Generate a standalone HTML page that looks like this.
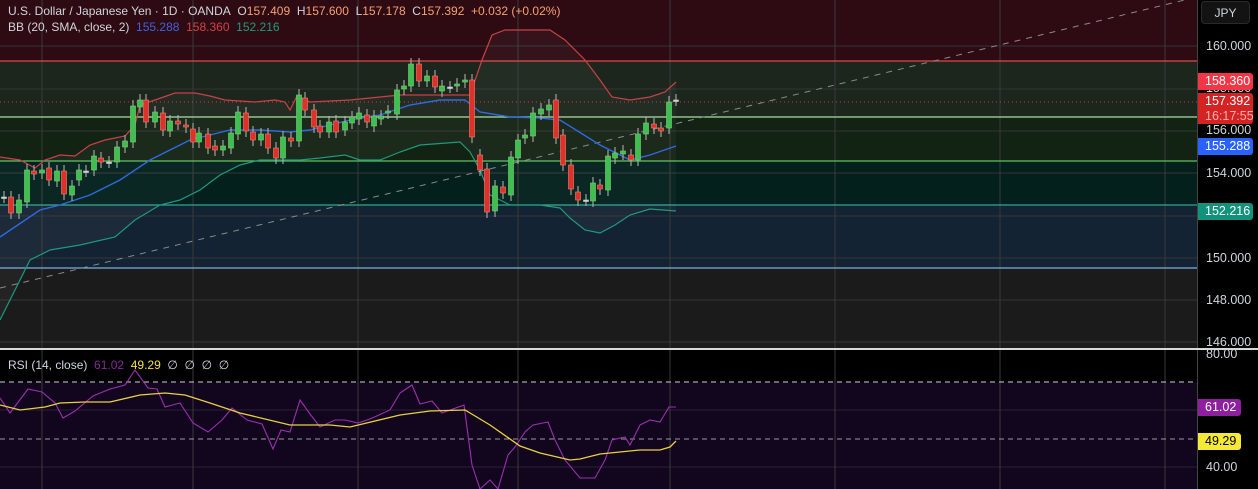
<!DOCTYPE html>
<html><head><meta charset="utf-8"><style>
*{margin:0;padding:0}
body{width:1258px;height:489px;background:#000;overflow:hidden;font-family:"Liberation Sans",sans-serif;position:relative}
svg{position:absolute;left:0;top:0}
.t{position:absolute;font-size:12px;color:#d1d4dc;white-space:nowrap}
.ax{position:absolute;left:1206px;font-size:12.5px;color:#d1d4dc}
.bx{position:absolute;left:1198px;width:55px;height:17px;border-radius:0 3px 3px 0;font-size:12.5px;color:#fff;padding-left:7px;box-sizing:border-box;line-height:17px}
</style></head><body>
<svg id="s" width="1258" height="489"></svg>
<div class="t" style="left:8px;top:4px">U.S. Dollar / Japanese Yen · 1D · OANDA&nbsp; O<span style="color:#f7a072">157.409</span>&nbsp; H<span style="color:#f7a072">157.600</span>&nbsp; L<span style="color:#f7a072">157.178</span>&nbsp; C<span style="color:#f7a072">157.392</span>&nbsp; <span style="color:#f7a072">+0.032 (+0.02%)</span></div>
<div class="t" style="left:8px;top:20px">BB (20, SMA, close, 2)&nbsp; <span style="color:#3e63dd">155.288</span>&nbsp; <span style="color:#d2404c">158.360</span>&nbsp; <span style="color:#1f9c7c">152.216</span></div>
<div class="t" style="left:8px;top:358px">RSI (14, close)&nbsp; <span style="color:#8a2a9a">61.02</span>&nbsp; <span style="color:#f0e040">49.29</span>&nbsp; ∅&nbsp; ∅&nbsp; ∅&nbsp; ∅</div>
<div style="position:absolute;left:1201px;top:1px;width:49px;height:23px;background:#131313;border:1px solid #2a2a2a;border-radius:4px;color:#d1d4dc;font-size:12px;line-height:23px;text-align:center;box-sizing:border-box">JPY</div>
<div class="ax" style="top:39px">160.000</div>
<div class="ax" style="top:81px">158.000</div>
<div class="ax" style="top:123px">156.000</div>
<div class="ax" style="top:166px">154.000</div>
<div class="ax" style="top:251px">150.000</div>
<div class="ax" style="top:293px">148.000</div>
<div class="ax" style="top:335px">146.000</div>
<div class="ax" style="top:347px">80.00</div>
<div class="ax" style="top:460px">40.00</div>
<div class="bx" style="top:73px;background:#f23645">158.360</div>
<div class="bx" style="top:93px;height:31px;background:#d42323;line-height:15px;padding-top:1px">157.392<br><span style="color:#f5b0b0">16:17:55</span></div>
<div class="bx" style="top:138px;background:#2962ff">155.288</div>
<div class="bx" style="top:203px;background:#10937a">152.216</div>
<div class="bx" style="top:399px;width:43px;background:#8e1f9e">61.02</div>
<div class="bx" style="top:433px;width:43px;background:#f5e836;color:#000">49.29</div>
<script>
var S='';
function r(x,y,w,h,c){S+='<rect x="'+x+'" y="'+y+'" width="'+w+'" height="'+h+'" fill="'+c+'"/>';}
function l(x1,y1,x2,y2,c,w,d){S+='<line x1="'+x1+'" y1="'+y1+'" x2="'+x2+'" y2="'+y2+'" stroke="'+c+'" stroke-width="'+(w||1)+'"'+(d?' stroke-dasharray="'+d+'"':'')+'/>';}
function p(a,c,w,f){S+='<polyline points="'+a.join(' ')+'" fill="'+(f||'none')+'" stroke="'+c+'" stroke-width="'+(w||1.2)+'"/>';}
var W=1197;
r(0,0,W,61,'#2e0b12');r(0,61,W,56,'#1d261d');r(0,117,W,44,'#132313');r(0,161,W,44,'#03201d');r(0,205,W,63,'#142333');r(0,268,W,81,'#1b1b1c');
r(0,349,W,33,'#000');r(0,382,W,107,'#12061f');
[46,89,131,173,216,258,300,342].forEach(function(y){l(0,y,W,y,'#343434',1)});
[410,467].forEach(function(y){l(0,y,W,y,'#2a2233',1)});
[42,193,358,518,670,835,1000,1165].forEach(function(x){l(x,0,x,489,'#3a3a3a',1)});
l(W+0.5,0,W+0.5,489,'#444',1);
l(0,61,W,61,'#e04848',1.2);l(0,117,W,117,'#a8e0a0',1.2);l(0,161,W,161,'#5cc45c',1.2);l(0,205,W,205,'#2fa890',1.2);l(0,268,W,268,'#7ab0e0',1.2);
l(0,102,W,102,'#c0392b',1,'1 3');
l(0,349,1258,349,'#d8d8d8',2);
l(0,382,W,382,'#cfcfcf',1,'5 4');l(0,439,W,439,'#9a9a9a',1,'5 4');
var up=[[0,157],[20,160],[35,168],[45,160],[60,155],[75,156],[90,145],[105,140],[125,136],[135,125],[140,105],[155,100],[175,93],[195,93],[210,96],[225,100],[255,102],[275,100],[285,102],[290,110],[297,96],[310,102],[350,100],[380,97],[400,95],[470,95],[482,60],[492,35],[505,30],[550,30],[565,40],[585,60],[600,80],[612,97],[630,100],[650,97],[665,92],[676,82]];
var lo=[[0,320],[10,300],[30,260],[50,250],[80,245],[115,237],[135,220],[160,205],[180,200],[200,190],[220,175],[240,165],[260,160],[300,160],[320,158],[345,155],[360,160],[380,160],[400,152],[420,145],[460,142],[470,152],[480,170],[490,195],[510,205],[540,205],[560,208],[570,218],[585,230],[600,233],[615,225],[630,215],[650,209],[676,211]];
var fill=up.concat(lo.slice().reverse());
p(fill,'none',0,'rgba(255,255,255,0.035)');
l(0,288,1197,-3,'#8a8a8a',1,'6 6');
p(up,'#c8404a',1.2);
p(lo,'#1e9a7c',1.2);
p([[0,237],[40,210],[60,205],[90,195],[120,180],[150,160],[170,150],[190,140],[210,135],[230,130],[260,130],[290,132],[310,130],[330,125],[350,120],[380,115],[410,105],[440,100],[465,100],[480,112],[510,117],[540,118],[560,120],[600,145],[630,160],[650,155],[676,146]],'#2f6ae0',1.4);
var C=[[4,197,197],[11,197,213],[19,213,200],[27,202,170],[34,171,174],[42,173,170],[49,168,180],[57,181,171],[64,171,194],[72,195,186],[79,180,170],[86,171,171],[94,170,156],[101,158,162],[109,162,162],[117,162,147],[125,147,141],[133,142,106],[140,107,100],[146,100,122],[155,122,112],[163,113,130],[170,131,121],[178,121,124],[186,125,127],[193,129,142],[199,142,133],[208,134,148],[215,146,150],[223,150,146],[231,148,133],[238,134,112],[246,113,131],[253,132,140],[261,140,134],[268,134,148],[276,148,158],[283,158,137],[291,138,141],[299,141,95],[305,98,110],[314,110,127],[320,126,132],[329,132,122],[336,121,132],[345,130,122],[352,123,117],[359,119,113],[367,115,122],[374,126,116],[381,119,116],[388,113,111],[397,114,90],[404,89,86],[411,86,64],[419,64,81],[427,81,76],[435,76,87],[442,91,86],[450,87,87],[457,86,84],[465,82,80],[472,80,137],[480,155,170],[487,169,212],[495,211,186],[503,187,193],[511,195,157],[518,158,140],[525,138,135],[533,136,113],[541,114,109],[549,110,105],[556,100,138],[563,135,165],[571,165,189],[578,192,200],[586,200,200],[593,201,183],[600,185,189],[608,190,156],[615,158,153],[623,154,151],[631,155,160],[638,160,134],[646,134,123],[654,124,128],[661,128,131],[669,128,102],[676,100,100]];
C.forEach(function(c){var x=c[0],o=c[1],cl=c[2],t=Math.min(o,cl),b=Math.max(o,cl);var g=cl<o;var col=g?'#3fbf4f':'#e0302a',bd=g?'#7ad27a':'#f08070';if(o==cl){col='#d0d0d0';bd=col;}
l(x,t-6,x,b+6,'#b8b8b8',1);r(x-2.5,t,5,Math.max(b-t,1.5),col);S+='<rect x="'+(x-2.5)+'" y="'+t+'" width="5" height="'+Math.max(b-t,1.5)+'" fill="none" stroke="'+bd+'" stroke-width="0.6"/>';});
p([[0,398],[10,413],[28,389],[42,392],[55,403],[63,418],[75,411],[93,396],[110,389],[125,385],[135,370],[148,388],[157,389],[165,407],[180,403],[193,423],[208,432],[222,420],[232,408],[247,420],[262,424],[273,449],[281,430],[290,432],[300,400],[310,414],[320,427],[335,420],[345,420],[358,423],[370,419],[390,410],[400,393],[412,385],[420,404],[432,401],[442,413],[464,405],[472,465],[480,489],[490,480],[498,489],[508,455],[515,447],[525,432],[533,425],[548,422],[555,440],[565,460],[580,478],[595,478],[605,460],[612,440],[625,437],[630,445],[640,425],[650,420],[660,422],[669,407],[676,407]],'#9b30b0',1.1);
p([[0,405],[20,410],[45,407],[60,403],[85,402],[110,402],[140,395],[165,393],[185,395],[210,403],[240,413],[290,425],[330,425],[350,427],[400,415],[430,411],[465,410],[490,425],[520,446],[540,453],[570,460],[580,459],[600,454],[640,450],[660,450],[670,447],[676,441]],'#e8d040',1.3);
document.getElementById('s').innerHTML=S;
</script>
</body></html>
